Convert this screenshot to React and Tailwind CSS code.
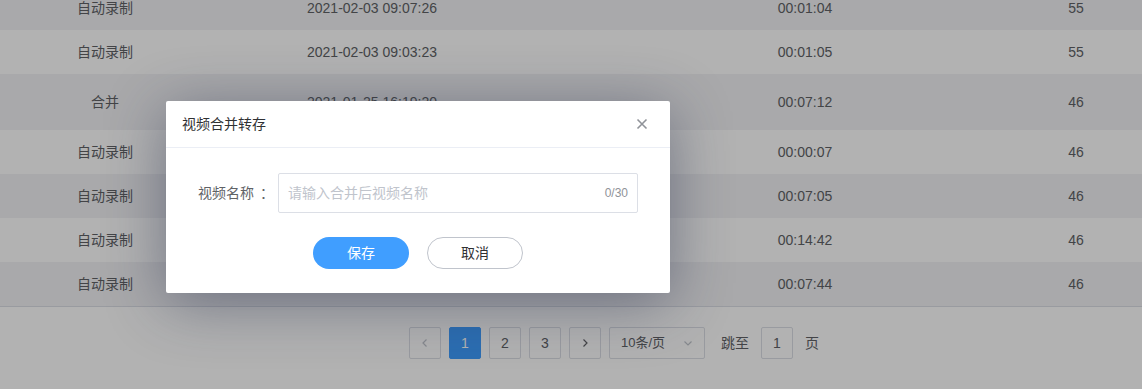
import React from 'react';

const ROWS = [
  { type: '自动录制', time: '2021-02-03 09:07:26', dur: '00:01:04', n: '55', h: 'h-[44px]' },
  { type: '自动录制', time: '2021-02-03 09:03:23', dur: '00:01:05', n: '55', h: 'h-[44px]' },
  { type: '合并',     time: '2021-01-25 16:19:20', dur: '00:07:12', n: '46', h: 'h-[56px]' },
  { type: '自动录制', time: '2021-01-25 16:10:11', dur: '00:00:07', n: '46', h: 'h-[44px]' },
  { type: '自动录制', time: '2021-01-25 16:02:47', dur: '00:07:05', n: '46', h: 'h-[44px]' },
  { type: '自动录制', time: '2021-01-25 15:46:30', dur: '00:14:42', n: '46', h: 'h-[44px]' },
  { type: '自动录制', time: '2021-01-25 15:38:02', dur: '00:07:44', n: '46', h: 'h-[44px]' },
];

const FONT = "font-['Liberation_Sans','Noto_Sans_CJK_SC',sans-serif]";

function PageBtn({ children, active, muted }) {
  return (
    <div
      className={`w-[32px] h-[32px] flex items-center justify-center rounded-[2px] text-[14px] border ${
        active ? 'bg-[#409eff] border-[#409eff] text-white' : `bg-white border-[#dcdfe6] ${muted ? 'text-[#c0c4cc]' : 'text-[#606266]'}`
      }`}
    >
      {children}
    </div>
  );
}

export default function App() {
  return (
    <div className={`relative w-[1142px] h-[389px] overflow-hidden bg-white ${FONT}`}>
      {/* table */}
      <div className="-mt-[14px]">
        {ROWS.map((r, i) => (
          <div
            key={i}
            className={`grid grid-cols-[210px_324px_166px_210px_100px_1fr] items-center text-[14px] text-[#606266] ${r.h} ${
              i % 2 === 0 ? 'bg-[#f2f3f5]' : 'bg-white'
            }`}
          >
            <div className="text-center">{r.type}</div>
            <div className="text-center">{r.time}</div>
            <div />
            <div className="text-center">{r.dur}</div>
            <div />
            <div className="text-center">{r.n}</div>
          </div>
        ))}
      </div>

      {/* pagination */}
      <div className="border-t border-[#dcdfe6] pt-[20px] flex items-center gap-[8px] pl-[409px] text-[13px] text-[#606266]">
        <PageBtn muted>
          <svg width="10" height="10" viewBox="0 0 10 10" fill="none" stroke="currentColor" strokeWidth="1.2"><path d="M6.5 1.5 3 5l3.5 3.5" /></svg>
        </PageBtn>
        <PageBtn active>1</PageBtn>
        <PageBtn>2</PageBtn>
        <PageBtn>3</PageBtn>
        <PageBtn>
          <svg width="10" height="10" viewBox="0 0 10 10" fill="none" stroke="currentColor" strokeWidth="1.2"><path d="M3.5 1.5 7 5 3.5 8.5" /></svg>
        </PageBtn>
        <div className="w-[96px] h-[32px] border border-[#dcdfe6] rounded-[2px] bg-white flex items-center justify-between pl-[11px] pr-[10px] text-[#606266]">
          <span>10条/页</span>
          <svg width="12" height="12" viewBox="0 0 12 12" fill="none" stroke="#c0c4cc" strokeWidth="1.2"><path d="M2.5 4.5 6 8l3.5-3.5" /></svg>
        </div>
        <span className="ml-[8px] text-[14px]">跳至</span>
        <div className="ml-[4px] w-[32px] h-[32px] border border-[#dcdfe6] rounded-[2px] bg-white flex items-center justify-center text-[14px]">1</div>
        <span className="ml-[4px] text-[14px]">页</span>
      </div>

      {/* overlay */}
      <div className="absolute inset-0 bg-black/30" />

      {/* dialog */}
      <div className="absolute left-[166px] top-[101px] w-[504px] h-[192px] bg-white rounded-[2px] shadow-[0_10px_60px_rgba(30,40,70,0.45)]">
        <div className="h-[47px] border-b border-[#ebeef5] flex items-center justify-between pl-[16px] pr-[22px]">
          <span className="text-[14px] text-[#303133]">视频合并转存</span>
          <svg width="12" height="12" viewBox="0 0 12 12" stroke="#909399" strokeWidth="1.6"><path d="M1.5 1.5l9 9M10.5 1.5l-9 9" /></svg>
        </div>
        <div className="flex items-center mt-[25px]">
          <div className="w-[112px] pr-[10px] flex justify-end text-[14px] text-[#606266]">
            <span>视频名称</span>
            <span className="inline-block w-[14px] pl-[6px]">：</span>
          </div>
          <div className="w-[360px] h-[40px] border border-[#dcdfe6] rounded-[2px] flex items-center justify-between pl-[9px] pr-[9px]">
            <span className="text-[14px] text-[#c0c4cc]">请输入合并后视频名称</span>
            <span className="text-[12px] text-[#909399]">0/30</span>
          </div>
        </div>
        <div className="flex justify-center gap-[18px] mt-[24px]">
          <div className="w-[96px] h-[32px] rounded-full bg-[#409eff] text-white text-[14px] flex items-center justify-center">保存</div>
          <div className="w-[96px] h-[32px] rounded-full border border-[#c0c4cc] bg-white text-[#303133] text-[14px] flex items-center justify-center">取消</div>
        </div>
      </div>
    </div>
  );
}
